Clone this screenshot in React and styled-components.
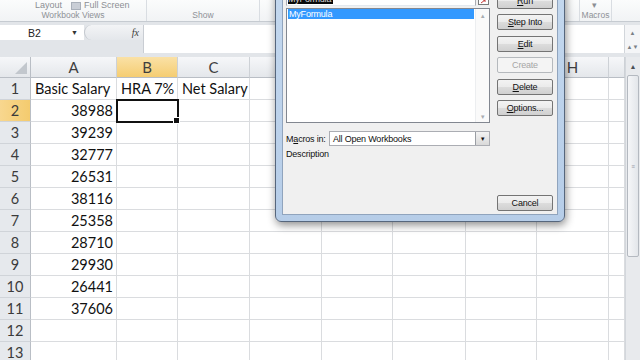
import React from 'react';
import styled, { createGlobalStyle } from 'styled-components';

const GlobalStyle = createGlobalStyle`
  body {
    margin: 0;
    overflow: hidden;
    background: #ffffff;
  }
`;

const Screen = styled.div`
  position: relative;
  width: 640px;
  height: 360px;
  overflow: hidden;
  background: #ffffff;
  font-family: 'Lato', 'Liberation Sans', sans-serif;
`;

/* ---------- ribbon ---------- */

const Ribbon = styled.div`
  display: flex;
  height: 22px;
  background: linear-gradient(#fbfcfc, #f1f3f5);
  border-bottom: 1px solid #c6cbd1;
  box-sizing: border-box;
`;

const RibbonGroup = styled.div`
  width: ${(p) => p.w}px;
  display: flex;
  flex-direction: column;
  border-right: ${(p) => (p.noSep ? 'none' : '1px solid #d9dde2')};
  box-sizing: border-box;
  font-family: 'Liberation Sans', sans-serif;
`;

const GroupTop = styled.div`
  height: 10px;
  display: flex;
  align-items: flex-end;
  gap: 3px;
  padding-left: ${(p) => p.pad || 0}px;
  font-size: 9px;
  line-height: 9px;
  color: #8c8f94;
  overflow: hidden;
`;

const GroupLabel = styled.div`
  height: 11px;
  text-align: center;
  font-size: 8.5px;
  line-height: 10px;
  color: #8e9196;
`;

const TinyIcon = styled.span`
  width: 8px;
  height: 6px;
  background: #c9ced6;
  border: 1px solid #a9b0ba;
  margin-left: 6px;
`;

/* ---------- formula bar ---------- */

const FormulaArea = styled.div`
  display: flex;
  height: 35px;
  background: #e2e5e9;
  padding-top: 3px;
  box-sizing: border-box;
`;

const NamePane = styled.div`
  width: 143px;
  display: flex;
  flex-direction: column;
`;

const NameRow = styled.div`
  display: flex;
  height: 15px;
`;

const NameBox = styled.div`
  width: 84px;
  background: #ffffff;
  display: flex;
  align-items: center;
  justify-content: space-between;
  padding: 0 6px 0 28px;
  box-sizing: border-box;
  font-family: 'Liberation Sans', sans-serif;
  font-size: 10.5px;
  color: #222;
`;

const Caret = styled.span`
  font-size: 7px;
  color: #333;
`;

const FxZone = styled.div`
  flex: 1;
  display: flex;
  align-items: center;
  justify-content: flex-end;
  padding-right: 4px;
  background: linear-gradient(#f3f4f6, #e4e7eb);
  border-radius: 8px 0 0 8px;
  border-left: 1px solid #c4c8ce;
  font-family: 'Liberation Serif', serif;
  font-style: italic;
  font-size: 10px;
  color: #3a3a3a;
`;

const FormulaInput = styled.div`
  flex: 1;
  height: 28px;
  background: #ffffff;
  border-left: 1px solid #c9cdd3;
`;

const ExpandButtons = styled.div`
  width: 15px;
  height: 28px;
  display: flex;
  flex-direction: column;
  align-items: center;
  justify-content: space-around;
  background: #f4f5f7;
  border-left: 1px solid #d2d6db;
  font-size: 6px;
  color: #7a7f86;
`;

/* ---------- sheet ---------- */

const SheetArea = styled.div`
  display: flex;
`;

const Grid = styled.div`
  display: grid;
  grid-template-columns: 31px 86px 61px 72px 72px 71px 73px 71px 72px 16px;
  grid-template-rows: 21px;
  grid-auto-rows: 22px;
  width: 625px;
`;

const Corner = styled.div`
  position: relative;
  background: linear-gradient(#f6f7f9, #e4e7eb);
  border-right: 1px solid #b9bec5;
  border-bottom: 1px solid #b9bec5;
  box-sizing: border-box;

  &::after {
    content: '';
    position: absolute;
    right: 3px;
    bottom: 3px;
    border-left: 12px solid transparent;
    border-bottom: 12px solid #c2c7cd;
  }
`;

const ColHeader = styled.div`
  display: flex;
  align-items: center;
  justify-content: center;
  background: ${(p) =>
    p.active ? 'linear-gradient(#fae1a6, #f5cd72)' : 'linear-gradient(#f6f7f9, #e4e7eb)'};
  border-right: 1px solid #cdd1d6;
  border-bottom: 1px solid #b9bec5;
  box-sizing: border-box;
  font-size: 15px;
  color: #3f3f3f;
`;

const RowHeader = styled.div`
  display: flex;
  align-items: center;
  justify-content: center;
  background: ${(p) => (p.active ? 'linear-gradient(90deg, #f8d78f, #f4cb6e)' : '#e6e9ed')};
  border-right: 1px solid #b9bec5;
  border-bottom: 1px solid #d0d4d9;
  box-sizing: border-box;
  font-size: 14.5px;
  color: #3b3b3b;
`;

const Cell = styled.div`
  position: relative;
  display: flex;
  align-items: center;
  justify-content: ${(p) => (p.right ? 'flex-end' : 'flex-start')};
  padding: 0 3px 0 4px;
  border-right: 1px solid #dadcdf;
  border-bottom: 1px solid #dadcdf;
  box-sizing: border-box;
  font-size: 14.5px;
  color: #111;
  white-space: nowrap;
  overflow: visible;
  ${(p) =>
    p.selected &&
    `
    outline: 2px solid #111;
    outline-offset: -1px;
    z-index: 2;
    &::after {
      content: '';
      position: absolute;
      right: -3px;
      bottom: -3px;
      width: 5px;
      height: 5px;
      background: #111;
      border: 1px solid #fff;
    }
  `}
`;

const VScroll = styled.div`
  width: 15px;
  display: flex;
  flex-direction: column;
  background: #e8eaed;
  border-left: 1px solid #d3d7dc;
  box-sizing: border-box;
`;

const ScrollArrow = styled.div`
  height: 18px;
  display: flex;
  align-items: center;
  justify-content: center;
  font-size: 7px;
  color: #4a4f57;
`;

const ScrollThumb = styled.div`
  height: 182px;
  margin: 0 1px;
  display: flex;
  align-items: center;
  justify-content: center;
  background: linear-gradient(90deg, #f5f6f8, #e3e6ea);
  border: 1px solid #b4b9c0;
  border-radius: 2px;
  box-sizing: border-box;
  font-size: 7px;
  line-height: 4px;
  color: #9aa0a8;
`;

/* ---------- macro dialog ---------- */

const Dialog = styled.div`
  position: absolute;
  left: 275px;
  top: -40px;
  width: 290px;
  height: 262px;
  padding: 29px 6px 6px 6px;
  box-sizing: border-box;
  background: linear-gradient(#c5d9ef, #b6cde8);
  border: 1px solid #56667c;
  border-radius: 0 0 6px 6px;
  box-shadow: 1px 3px 8px rgba(0, 0, 0, 0.45);
  font-family: 'Liberation Sans', sans-serif;
  font-size: 9px;
  letter-spacing: -0.2px;
  z-index: 10;
`;

const DialogBody = styled.div`
  height: 100%;
  display: flex;
  gap: 7px;
  padding: 0 4px 3px 3px;
  box-sizing: border-box;
  background: #f0f0f0;
  border: 1px solid #90a4bd;
`;

const LeftCol = styled.div`
  width: 204px;
  display: flex;
  flex-direction: column;
`;

const NameField = styled.div`
  display: flex;
  height: 15px;
`;

const NameInput = styled.div`
  flex: 1;
  display: flex;
  align-items: flex-end;
  padding: 0 0 1px 1px;
  background: #fff;
  border: 1px solid #abadb3;
  border-bottom-color: #e3e9ef;
  box-sizing: border-box;
`;

const Highlight = styled.span`
  background: #0a0a0a;
  color: #d8d8d8;
  line-height: 10px;
  padding-right: 2px;
`;

const PickButton = styled.div`
  width: 14px;
  display: flex;
  align-items: flex-end;
  justify-content: center;
  padding-bottom: 1px;
  box-sizing: border-box;
`;

const ListBox = styled.div`
  margin-top: 2px;
  height: 115px;
  display: flex;
  background: #fff;
  border: 1px solid #828790;
  box-sizing: border-box;
`;

const ListItems = styled.div`
  flex: 1;
  padding: 0 1px;
`;

const ListItem = styled.div`
  height: 10px;
  line-height: 10px;
  padding-left: 1px;
  background: ${(p) => (p.selected ? '#3399ff' : 'transparent')};
  color: ${(p) => (p.selected ? '#fff' : '#000')};
`;

const ListScroll = styled.div`
  width: 13px;
  display: flex;
  flex-direction: column;
  justify-content: space-between;
  align-items: center;
  padding: 4px 0 2px;
  background: #fafafa;
  border-left: 1px solid #eceef0;
  font-size: 6px;
  color: #a8acb1;
`;

const FieldRow = styled.div`
  margin-top: 8px;
  height: 15px;
  display: flex;
  align-items: center;
`;

const FieldLabel = styled.div`
  width: 43px;
  color: #111;
`;

const Select = styled.div`
  flex: 1;
  height: 15px;
  display: flex;
  align-items: center;
  background: #fff;
  border: 1px solid #abadb3;
  box-sizing: border-box;
  padding-left: 3px;
  color: #111;
`;

const SelectText = styled.span`
  flex: 1;
`;

const SelectArrow = styled.div`
  width: 13px;
  height: 13px;
  display: flex;
  align-items: center;
  justify-content: center;
  background: linear-gradient(#f3f3f3, #d9d9d9);
  border-left: 1px solid #9a9ea4;
  font-size: 6px;
  color: #111;
`;

const Description = styled.div`
  margin-top: 3px;
  color: #111;
`;

const RightCol = styled.div`
  width: 56px;
  display: flex;
  flex-direction: column;
  gap: 5.4px;
  padding-top: 2px;
`;

const Button = styled.div`
  height: 16px;
  display: flex;
  align-items: center;
  justify-content: center;
  box-sizing: border-box;
  border: 1px solid ${(p) => (p.disabled ? '#b5b9bd' : '#747474')};
  border-radius: 2px;
  background: ${(p) =>
    p.disabled
      ? '#f4f4f4'
      : 'linear-gradient(#f3f3f3 0%, #ebebeb 48%, #dcdcdc 52%, #d0d0d0 100%)'};
  color: ${(p) => (p.disabled ? '#a6a6a6' : '#111')};
  margin-top: ${(p) => (p.bottom ? 'auto' : '0')};

  u {
    text-decoration: underline;
  }
`;

const CELLS = [38988, 39239, 32777, 26531, 38116, 25358, 28710, 29930, 26441, 37606];
const COLS = ['', 'A', 'B', 'C', 'D', 'E', 'F', 'G', 'H', ''];

const PickIcon = () => (
  <svg width="11" height="9" viewBox="0 0 11 9">
    <rect x="0.5" y="0.5" width="10" height="8" fill="#fff" stroke="#7a7a7a" />
    <rect x="1" y="1" width="9" height="2" fill="#c43c3c" />
    <path d="M3 7 L7 4 M5 4 H7 V6" stroke="#c43c3c" strokeWidth="1" fill="none" />
  </svg>
);

const MacroDialog = () => (
  <Dialog>
    <DialogBody>
      <LeftCol>
        <NameField>
          <NameInput>
            <Highlight>MyFormula</Highlight>
          </NameInput>
          <PickButton>
            <PickIcon />
          </PickButton>
        </NameField>
        <ListBox>
          <ListItems>
            <ListItem selected>MyFormula</ListItem>
          </ListItems>
          <ListScroll>
            <span>▲</span>
            <span>▼</span>
          </ListScroll>
        </ListBox>
        <FieldRow>
          <FieldLabel>
            M<u>a</u>cros in:
          </FieldLabel>
          <Select>
            <SelectText>All Open Workbooks</SelectText>
            <SelectArrow>▼</SelectArrow>
          </Select>
        </FieldRow>
        <Description>Description</Description>
      </LeftCol>
      <RightCol>
        <Button>
          <u>R</u>un
        </Button>
        <Button>
          <u>S</u>tep Into
        </Button>
        <Button>
          <u>E</u>dit
        </Button>
        <Button disabled>Create</Button>
        <Button>
          <u>D</u>elete
        </Button>
        <Button>
          <u>O</u>ptions...
        </Button>
        <Button bottom>Cancel</Button>
      </RightCol>
    </DialogBody>
  </Dialog>
);

const rowContent = (r, c) => {
  if (r === 1) {
    if (c === 1) return 'Basic Salary';
    if (c === 2) return 'HRA 7%';
    if (c === 3) return 'Net Salary';
    return '';
  }
  if (c === 1 && r <= 11) return CELLS[r - 2];
  return '';
};

const App = () => {
  const rows = Array.from({ length: 13 }, (_, i) => i + 1);
  return (
    <Screen>
      <GlobalStyle />
      <Ribbon>
        <RibbonGroup w={147}>
          <GroupTop pad={35}>
            <span>Layout</span>
            <TinyIcon />
            <span>Full Screen</span>
          </GroupTop>
          <GroupLabel>Workbook Views</GroupLabel>
        </RibbonGroup>
        <RibbonGroup w={113}>
          <GroupTop />
          <GroupLabel>Show</GroupLabel>
        </RibbonGroup>
        <RibbonGroup w={320}>
          <GroupTop pad={285}>
            <span>s ▾</span>
          </GroupTop>
          <GroupLabel />
        </RibbonGroup>
        <RibbonGroup w={32}>
          <GroupTop pad={12}>
            <span>▾</span>
          </GroupTop>
          <GroupLabel>Macros</GroupLabel>
        </RibbonGroup>
        <RibbonGroup w={28} noSep />
      </Ribbon>

      <FormulaArea>
        <NamePane>
          <NameRow>
            <NameBox>
              <span>B2</span>
              <Caret>▼</Caret>
            </NameBox>
            <FxZone>fx</FxZone>
          </NameRow>
        </NamePane>
        <FormulaInput />
        <ExpandButtons>
          <span>▲</span>
          <span>▲▼</span>
        </ExpandButtons>
      </FormulaArea>

      <SheetArea>
        <Grid>
          <Corner />
          {COLS.slice(1).map((c, i) => (
            <ColHeader key={i} active={c === 'B'}>
              {c}
            </ColHeader>
          ))}
          {rows.map((r) => (
            <React.Fragment key={r}>
              <RowHeader active={r === 2}>{r}</RowHeader>
              {COLS.slice(1).map((_, ci) => {
                const c = ci + 1;
                const v = rowContent(r, c);
                return (
                  <Cell key={c} right={typeof v === 'number'} selected={r === 2 && c === 2}>
                    {v}
                  </Cell>
                );
              })}
            </React.Fragment>
          ))}
        </Grid>
        <VScroll>
          <ScrollArrow>▲</ScrollArrow>
          <ScrollThumb>≡</ScrollThumb>
        </VScroll>
      </SheetArea>

      <MacroDialog />
    </Screen>
  );
};

export default App;
